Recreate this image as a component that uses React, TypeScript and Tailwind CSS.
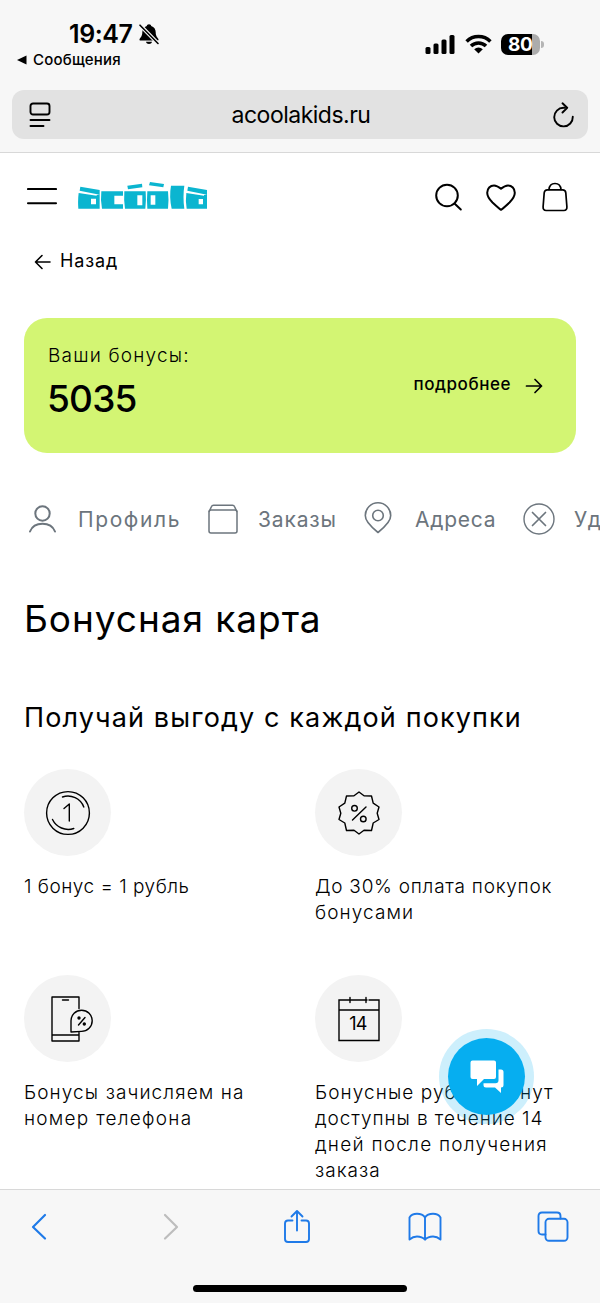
import type { ReactNode } from "react";

type IconProps = { w: number; h: number; sw?: number; box?: string; className?: string; children: ReactNode };

function Icon({ w, h, sw = 2, box, className = "", children }: IconProps) {
  return (
    <svg
      width={w}
      height={h}
      viewBox={box ?? `0 0 ${w} ${h}`}
      fill="none"
      stroke="currentColor"
      strokeWidth={sw}
      strokeLinecap="round"
      strokeLinejoin="round"
      className={`block shrink-0 ${className}`}
    >
      {children}
    </svg>
  );
}

function StatusBar() {
  return (
    <div className="flex h-[90px] justify-between">
      <div className="pl-[16px] pt-[19px]">
        <div className="flex h-[30px] items-center pl-[53px]">
          <span className="text-[25px] leading-[30px] font-semibold tracking-[-0.4px]">19:47</span>
          <Icon w={22} h={22} className="ml-[5px]">
            <path
              d="M11 1.2c-1.3 0-2.1.8-2.2 1.7C5.9 3.8 4.3 6.2 4.3 9.2c0 4.2-1.9 5.3-2.7 6.8-.4.9.1 1.6 1.1 1.6h16.600c1 0 1.500-.7 1.100-1.600-.8-1.500-2.700-2.600-2.700-6.800 0-3-1.600-5.400-4.500-6.300-.1-.9-.9-1.700-2.200-1.700zM8 18.800c.3 1.400 1.500 2.200 3 2.200s2.700-.8 3-2.200z"
              fill="currentColor"
              stroke="none"
            />
            <path d="M2 2.200 20 20.500" stroke="#f7f7f7" strokeWidth="3.800" />
            <path d="M2 2.200 20 20.500" strokeWidth="1.600" />
          </Icon>
        </div>
        <div className="flex h-[22px] items-center">
          <Icon w={11} h={10}>
            <path d="M1 5 10.500.5v9z" fill="currentColor" stroke="none" />
          </Icon>
          <span className="ml-[6px] text-[15px] leading-[22px] font-medium tracking-[0.2px]">Сообщения</span>
        </div>
      </div>
      <div className="mt-[33px] flex h-[22px] items-center pr-[56px]">
        <Icon w={31} h={20}>
          <g fill="currentColor" stroke="none">
            <rect x="0.500" y="13" width="5" height="7" rx="1.500" />
            <rect x="8.500" y="9.500" width="5" height="10.500" rx="1.500" />
            <rect x="16.500" y="5.500" width="5" height="14.500" rx="1.500" />
            <rect x="24.500" y="1" width="5" height="19" rx="1.500" />
          </g>
        </Icon>
        <Icon w={27} h={20} className="ml-[9px]">
          <g strokeLinecap="butt" strokeWidth="3.500">
            <path d="M1.600 7.400a16.800 16.800 0 0 1 23.800 0" />
            <path d="M6 12a10.600 10.600 0 0 1 15 0" />
          </g>
          <path d="M9.200 15.300a6.200 6.200 0 0 1 8.600 0L13.500 19.500z" fill="currentColor" stroke="none" />
        </Icon>
        <div className="ml-[9px] flex h-[21px] w-[39px] items-center overflow-hidden rounded-[7px] bg-[linear-gradient(90deg,#000_31px,#acacac_31px)]">
          <span className="pl-[7px] text-[19px] leading-[21px] font-bold tracking-[-0.3px] text-white">80</span>
        </div>
        <div className="ml-[1px] h-[7px] w-[3px] rounded-r-full bg-[#b5b5b5]" />
      </div>
    </div>
  );
}

function AddressBar() {
  return (
    <div className="mx-[12px] flex h-[49px] items-center justify-between rounded-[12px] bg-[#e2e2e2] pr-[13px] pl-[17px]">
      <Icon w={22} h={26} sw={1.900}>
        <rect x="1.500" y="1.500" width="19" height="11" rx="2.500" />
        <path d="M1.500 18h19M1.500 24h13" />
      </Icon>
      <span className="text-[23px] leading-[28px] tracking-[-0.5px]">acoolakids.ru</span>
      <Icon w={24} h={26} sw={1.900}>
        <path d="M14 5.800h-1.500a9.300 9.300 0 1 0 9.300 9" />
        <path d="M11.500 1.300 16.200 5.800 11.500 10.500" />
      </Icon>
    </div>
  );
}

function Logo() {
  return (
    <svg
      width="130"
      height="28"
      viewBox="234 63 390 84"
      className="-mt-[4px] ml-[21px] block shrink-0 text-[#0bb5d0]"
      fill="currentColor"
    >
      <path d="M241 80 299 90V104L239 92zM236 99 290 107V105L299 104V146H235Q233 121 236 99zM273 116V133H288V116z" fillRule="evenodd" />
      <path d="M304 94H369V107H343V133H369V146H306Q301 120 304 94z" />
      <path d="M373 94H437Q439 120 436 146H375Q371 120 373 94zM412 106V136H427V106z" fillRule="evenodd" />
      <path d="M382 77 426 71 427 82 384 88z" />
      <path d="M442 94H504Q507 120 504 146H442Q440 120 442 94zM452 106V134H466V106z" fillRule="evenodd" />
      <path d="M450 66 492 72 490 82 447 76z" />
      <path d="M513 77H553Q548 110 553 146H515Q507 110 513 77z" />
      <path d="M564 80 621 90V104L562 92zM559 99 612 107V105L621 104V146H560Q556 121 559 99zM596 117V133H609V117z" fillRule="evenodd" />
    </svg>
  );
}

function Header() {
  return (
    <header className="flex h-[88px] items-center pl-[27px]">
      <Icon w={30} h={18} sw={2.100} className="-mt-[2px]">
        <path d="M1 2h28M1 16.200h28" />
      </Icon>
      <Logo />
      <Icon w={28} h={28} className="ml-[227px]" sw={2}>
        <circle cx="12" cy="12.500" r="10.800" />
        <path d="m19.500 20.500 6.300 6" />
      </Icon>
      <Icon w={30} h={27} className="ml-[23px]" sw={2}>
        <path d="M15 25.800Q13.500 25 6.500 18.500C2.500 14.500 1.200 12 1.200 8.800 1.200 4.500 4.200 1.500 8 1.500c2.800 0 4.600 1.300 7 3.300 2.400-2 4.200-3.300 7-3.300 3.800 0 6.800 3 6.800 7.300 0 3.200-1.300 5.700-5.300 9.700Q16.500 25 15 25.800z" />
      </Icon>
      <Icon w={28} h={30} className="-mt-[1px] ml-[25px]" sw={1.700}>
        <path d="M6.500 7.800h15q3 0 3.300 3l1.100 14q.2 3.700-3 3.700H5.100q-3.200 0-3-3.700l1.100-14q.3-3 3.300-3z" />
        <path d="M8 7.500C8.300 3.500 10.500 1.500 14 1.500s5.700 2 6 6" />
      </Icon>
    </header>
  );
}

function BonusCard() {
  return (
    <section className="mx-[24px] mt-[39px] flex h-[135px] items-center justify-between rounded-[23px] bg-[#d3f573] px-[24px]">
      <div className="h-[90px] pt-[1px]">
        <p className="text-[19px] leading-[28px] font-light tracking-[1.2px]">Ваши бонусы:</p>
        <p className="mt-[7px] -ml-[1px] text-[37px] leading-[44px] font-medium tracking-[-0.8px]">5035</p>
      </div>
      <div className="mr-[9px] flex items-center">
        <span className="-mt-[3px] text-[17px] leading-[22px] font-medium tracking-[0.55px]">подробнее</span>
        <Icon w={18} h={16} className="mt-[1px] ml-[14px]" sw={1.700}>
          <path d="M1.500 8h15M10 1.500 16.500 8 10 14.500" />
        </Icon>
      </div>
    </section>
  );
}

function Tabs() {
  return (
    <nav className="mt-[42px] flex h-[48px] items-center overflow-hidden text-[21px] leading-[28px] whitespace-nowrap text-[#6c757d]">
      <div className="flex w-[208px] shrink-0 items-center pl-[28px]">
        <Icon w={30} h={28} sw={2}>
          <circle cx="14.500" cy="8.500" r="7.200" />
          <path d="M2 26.500C4 21.500 8.500 18.800 14.500 18.800S25 21.500 27 26.500" />
        </Icon>
        <span className="mt-[1px] ml-[20px] tracking-[1.6px]">Профиль</span>
      </div>
      <div className="flex w-[156px] shrink-0 items-center">
        <Icon w={30} h={30} sw={1.500}>
          <rect x="1" y="6" width="28" height="23" rx="2" />
          <path d="M1.200 7.500 3.500 2.500q.5-1.300 2-1.300h19q1.500 0 2 1.300l2.300 5" />
        </Icon>
        <span className="mt-[1px] ml-[20px] tracking-[0.85px]">Заказы</span>
      </div>
      <div className="flex w-[159px] shrink-0 items-center">
        <Icon w={28} h={32} sw={1.600} className="-mt-[2px]">
          <path d="M14 30.500Q8 25.800 4 20.500C1.800 17.600 1.300 15.800 1.300 13.500a12.700 12.700 0 0 1 25.400 0c0 2.300-.5 4.100-2.700 7Q20 25.800 14 30.500z" />
          <circle cx="14" cy="13.500" r="5.300" />
        </Icon>
        <span className="mt-[1px] ml-[23px] tracking-[0.75px]">Адреса</span>
      </div>
      <div className="flex shrink-0 items-center">
        <Icon w={32} h={32} sw={1.400}>
          <circle cx="16" cy="16" r="15" />
          <path d="m9.500 9.500 13 13m0-13-13 13" strokeWidth="1.700" />
        </Icon>
        <span className="mt-[1px] ml-[19px] tracking-[0.5px]">Удалить</span>
      </div>
    </nav>
  );
}

function CoinIcon() {
  return (
    <Icon w={46} h={46} sw={1.400}>
      <circle cx="23" cy="23" r="21.400" />
      <path d="M17.500 7A17 17 0 0 1 38.800 17M7.500 29.500A17.500 17.500 0 0 0 28.800 38.500M19 18.500 24.300 14V31" />
    </Icon>
  );
}

function DiscountIcon() {
  return (
    <Icon w={42} h={44} sw={1.400}>
      <path d="M21 1 26 4.800 33.500 5 35.200 12.200 41 16 39.200 22.300 41 28.500 35.200 32 33.500 39.500 26 39.300 21 43 16 39.300 8.500 39.500 6.800 32 1 28.500 2.800 22.300 1 16 6.800 12.200 8.500 5 16 4.800z" />
      <path d="M14.500 29 28 16" />
      <circle cx="16.500" cy="17.300" r="2.800" />
      <circle cx="25.300" cy="28" r="2.800" />
    </Icon>
  );
}

function PhoneIcon() {
  return (
    <Icon w={50} h={46} sw={1.400} className="ml-[11px]">
      <path d="M31 12.500V1H4v44h27v-9M4 39h27M14.500 4h6M23 36V24.800a10.600 10.600 0 1 1 10.600 10.600L23 36" />
      <path d="m30.500 29 6.500-7.500" />
      <circle cx="31" cy="22" r="1" fill="currentColor" />
      <circle cx="36.300" cy="28" r="1" fill="currentColor" />
    </Icon>
  );
}

function CalendarIcon() {
  return (
    <div className="relative">
      <Icon w={42} h={46} sw={1.400}>
        <path d="M11 4H1v40.500h40V4H31M13 4h16M1 14h40M12 1.500v5M28 1.500v5" strokeLinejoin="miter" />
      </Icon>
      <span className="absolute inset-x-0 top-[16px] pr-[1px] text-center text-[18px] leading-[24px] tracking-[-0.6px]">14</span>
    </div>
  );
}

type Line = { text: string; track: string };

function Benefit({ icon, lines }: { icon: ReactNode; lines: Line[] }) {
  return (
    <div>
      <div className="flex size-[87px] items-center justify-center rounded-full bg-[#f3f3f3]">{icon}</div>
      <p className="mt-[18px] text-[19px] leading-[26px] font-light whitespace-nowrap">
        {lines.map(({ text, track }) => (
          <span key={text} className={`block ${track}`}>
            {text}
          </span>
        ))}
      </p>
    </div>
  );
}

function BottomBar() {
  return (
    <footer className="h-[114px] shrink-0 border-t border-[#d8d8d8] bg-[#f7f7f7]">
      <div className="flex h-[74px] items-center text-[#1f7ae8]">
        <Icon w={16} h={28} sw={2.200} className="ml-[31px]">
          <path d="M14 2 2 14l12 11.500" />
        </Icon>
        <Icon w={16} h={28} sw={2.200} className="ml-[116px] text-[#bdbdbd]">
          <path d="m2 2 12 12L2 25.500" />
        </Icon>
        <Icon w={28} h={34} sw={1.900} className="-mt-[2px] ml-[104px]">
          <path d="M9.500 11.500H5q-3 0-3 3v15.500q0 3 3 3h18q3 0 3-3V14.500q0-3-3-3h-4.500M14 21.500V2.500M8.500 7.500 14 2l5.500 5.500" />
        </Icon>
        <Icon w={34} h={30} sw={1.900} className="-mt-[1px] ml-[97px]">
          <path d="M17 5.500C15 2.500 12 1.800 9 1.800S3 3 1.500 5.500V27.500C4 25.300 6.500 24.500 9 24.500s6 1 8 3.200c2-2.200 5.500-3.200 8-3.200s5 .8 7.500 3V5.500C31 3 28 1.800 25 1.800s-6 .7-8 3.700zM17 5.500V27" />
        </Icon>
        <Icon w={32} h={32} sw={1.900} className="ml-[95px]">
          <path d="M8.500 23.500H5q-3.500 0-3.500-3.500V5Q1.500 1.500 5 1.500h15q3.500 0 3.500 3.500v2.500" />
          <rect x="8.500" y="7.800" width="22" height="22" rx="3.500" />
        </Icon>
      </div>
      <div className="mx-auto mt-[21px] h-[7px] w-[214px] rounded-full bg-black" />
    </footer>
  );
}

export default function App() {
  return (
    <div className="relative flex h-[1303px] w-[600px] flex-col overflow-hidden bg-white font-['Inter',sans-serif] text-black">
      <div className="h-[153px] shrink-0 border-b border-[#d8d8d8] bg-[#f7f7f7]">
        <StatusBar />
        <AddressBar />
      </div>
      <main className="min-h-0 grow">
        <Header />
        <div className="flex h-[38px] items-center pl-[34px]">
          <Icon w={17} h={16} sw={1.600} className="mt-[4px]">
            <path d="M16 8H1.500M8 1.500 1.500 8 8 14.500" />
          </Icon>
          <span className="mt-[1px] ml-[9px] text-[18px] leading-[24px] tracking-[0.85px]">Назад</span>
        </div>
        <BonusCard />
        <Tabs />
        <h1 className="mt-[52px] pl-[24px] text-[37px] leading-[48px] tracking-[0.95px] whitespace-nowrap">Бонусная карта</h1>
        <h2 className="mt-[57px] pl-[24px] text-[27px] leading-[36px] tracking-[1.13px] whitespace-nowrap">Получай выгоду с каждой покупки</h2>
        <div className="mt-[33px] grid grid-cols-[291px_1fr] gap-y-[49px] pl-[24px]">
          <Benefit icon={<CoinIcon />} lines={[{ text: "1 бонус = 1 рубль", track: "tracking-[0.5px]" }]} />
          <Benefit
            icon={<DiscountIcon />}
            lines={[
              { text: "До 30% оплата покупок", track: "tracking-[0.75px]" },
              { text: "бонусами", track: "tracking-[1.1px]" },
            ]}
          />
          <Benefit
            icon={<PhoneIcon />}
            lines={[
              { text: "Бонусы зачисляем на", track: "tracking-[1.1px]" },
              { text: "номер телефона", track: "tracking-[1.25px]" },
            ]}
          />
          <Benefit
            icon={<CalendarIcon />}
            lines={[
              { text: "Бонусные рубли станут", track: "tracking-[1.08px]" },
              { text: "доступны в течение 14", track: "tracking-[0.93px]" },
              { text: "дней после получения", track: "tracking-[1.25px]" },
              { text: "заказа", track: "tracking-[1px]" },
            ]}
          />
        </div>
      </main>
      <BottomBar />
      <button className="absolute top-[1029px] left-[439px] flex size-[95px] items-center justify-center rounded-full bg-[#06aef0]/20">
        <span className="flex size-[77px] items-center justify-center rounded-full bg-[#06aef0] text-white">
          <Icon w={34} h={34} className="mt-[1px]">
            <path d="M2.500.500h21.500q2 0 2 2v14.500q0 2-2 2H14L7 26v-7H2.500q-2 0-2-2V2.500q0-2 2-2z" fill="currentColor" stroke="none" />
            <path d="M28.500 9.500h2.500q2.500 0 2.500 2.500v13q0 2.500-2.500 2.500v5.500l-6-5.500H16q-2.500 0-2.500-2.500v-1.800h12q3 0 3-3z" fill="currentColor" stroke="none" />
          </Icon>
        </span>
      </button>
    </div>
  );
}
